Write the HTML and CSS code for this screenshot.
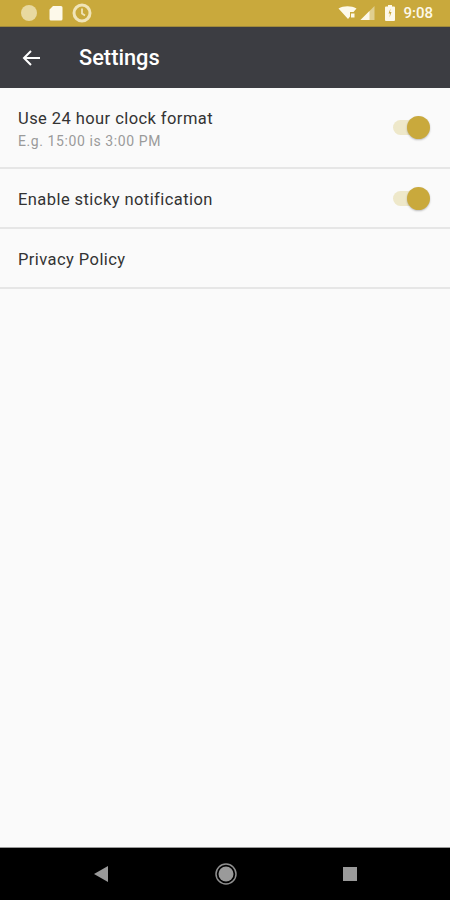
FILE: index.html
```html
<!DOCTYPE html>
<html lang="en">
<head>
  <meta charset="UTF-8">
  <meta name="viewport" content="width=device-width, initial-scale=1.0">
  <title>Settings</title>
  <link rel="stylesheet" href="styles.css">
</head>
<body>
  <div class="phone">
    <div class="status-bar">
      <div class="status-left">
        <span class="dot"></span>
        <svg class="sd-icon" width="15" height="16" viewBox="0 0 15 16"><path d="M5 1h8a1.5 1.5 0 0 1 1.500 1.500v11.500a1.500 1.500 0 0 1-1.500 1.500h-10a1.500 1.500 0 0 1-1.500-1.500v-9.500z" fill="#fdf9ea"/></svg>
        <svg class="clock-icon" width="20" height="20" viewBox="0 0 20 20"><circle cx="10" cy="10" r="8" fill="none" stroke="#f0e4b8" stroke-width="3"/><path d="M10 5.500v5l3 2" fill="none" stroke="#f0e4b8" stroke-width="1.800"/></svg>
      </div>
      <div class="status-right">
        <svg class="wifi-icon" width="19" height="14" viewBox="0 0 19 14"><path d="M0.500 2.500c5-3 13-3 18 0l-3 3.500h-3.500v4.500l-2 2.500z" fill="#fdf9ea"/><path d="M13 7.500h3.500v4h-3.500z" fill="#fdf9ea"/></svg>
        <svg class="signal-icon" width="15" height="14" viewBox="0 0 15 14"><path d="M0.500 14l14-14v14z" fill="#e0cf8f"/><path d="M0.500 14l9-9v9z" fill="#fdf9ea"/></svg>
        <svg class="battery-icon" width="10" height="16" viewBox="0 0 10 16"><path d="M3 0h4v1.500h2a1 1 0 0 1 1 1v12.500a1 1 0 0 1-1 1h-8a1 1 0 0 1-1-1v-12.500a1 1 0 0 1 1-1h2z" fill="#fdf9ea"/><path d="M5.500 3.500l-2 5h1.500l-.5 4 2-5.500h-1.500z" fill="#c9a93c"/></svg>
        <span class="clock">9:08</span>
      </div>
    </div>

    <div class="toolbar">
      <svg class="back-icon" width="20" height="18" viewBox="0 0 20 18"><path d="M19 9H3M10 2L3 9l7 7" fill="none" stroke="#fff" stroke-width="2"/></svg>
      <h1>Settings</h1>
    </div>

    <div class="settings">
      <div class="row row-tall">
        <div class="row-text">
          <div class="title">Use 24 hour clock format</div>
          <div class="summary">E.g. 15:00 is 3:00 PM</div>
        </div>
        <div class="switch"><span class="track"></span><span class="thumb"></span></div>
      </div>
      <div class="row">
        <div class="row-text">
          <div class="title">Enable sticky notification</div>
        </div>
        <div class="switch"><span class="track"></span><span class="thumb"></span></div>
      </div>
      <div class="row">
        <div class="row-text">
          <div class="title">Privacy Policy</div>
        </div>
      </div>
    </div>

    <div class="nav-bar">
      <svg width="14" height="16" viewBox="0 0 14 16"><path d="M14 0v16L0 8z" fill="#9a9a9a"/></svg>
      <svg width="22" height="22" viewBox="0 0 22 22"><circle cx="11" cy="11" r="10" fill="none" stroke="#8f8f8f" stroke-width="1.500"/><circle cx="11" cy="11" r="7.500" fill="#9a9a9a"/></svg>
      <svg width="14" height="14" viewBox="0 0 14 14"><rect width="14" height="14" fill="#9a9a9a"/></svg>
    </div>
  </div>
</body>
</html>
```

FILE: styles.css
```css
/* Settings screen */
html, body {
  margin: 0;
  padding: 0;
}

body {
  font-family: Roboto, "Liberation Sans", sans-serif;
  background-color: #fafafa;
}

.phone {
  width: 450px;
  height: 900px;
  display: flex;
  flex-direction: column;
  overflow: hidden;
}

.status-bar {
  height: 26px;
  flex-shrink: 0;
  background-color: #c9a93c;
  display: flex;
  justify-content: space-between;
  align-items: center;
  padding: 0 17px 0 21px;
  border-bottom: 1px solid #a08a3c;
}

.status-left, .status-right {
  display: flex;
  align-items: center;
}

.status-left {
  gap: 11px;
}

.dot {
  width: 16px;
  height: 16px;
  border-radius: 50%;
  background-color: #e8d9a0;
}

.sd-icon {
  margin-right: -2px;
}

.status-right .signal-icon {
  margin-left: 3px;
}

.status-right .battery-icon {
  margin-left: 10px;
}

.clock {
  margin-left: 8px;
  color: #fdf9ea;
  font-size: 15px;
  font-weight: 500;
}

.toolbar {
  height: 61px;
  flex-shrink: 0;
  background-color: #3c3d42;
  display: flex;
  align-items: center;
  padding-left: 21px;
  box-sizing: border-box;
}

.toolbar h1 {
  margin: 0 0 0 38px;
  color: #fff;
  font-size: 21.800px;
  font-weight: 500;
}

.settings {
  flex: 1;
  background-color: #fafafa;
}

.row {
  height: 60px;
  box-sizing: border-box;
  display: flex;
  align-items: center;
  justify-content: space-between;
  padding: 0 20px 0 18px;
  border-bottom: 2px solid #e6e6e6;
}

.row-tall {
  height: 81px;
}

.row-text {
  padding-top: 2px;
}

.title {
  font-size: 16.500px;
  color: #333;
  letter-spacing: 0.430px;
}

.summary {
  margin-top: 5px;
  font-size: 14px;
  color: #9a9a9a;
  letter-spacing: 0.590px;
}

.switch {
  position: relative;
  width: 37px;
  height: 23px;
}

.track {
  position: absolute;
  left: 0;
  top: 4px;
  width: 32px;
  height: 15px;
  border-radius: 8px;
  background-color: #eee8ca;
}

.thumb {
  position: absolute;
  right: 0;
  top: 0;
  width: 23px;
  height: 23px;
  border-radius: 50%;
  background-color: #c9a93c;
  box-shadow: 0 1px 2px rgba(0, 0, 0, 0.25);
}

.nav-bar {
  height: 52px;
  flex-shrink: 0;
  background-color: #000;
  border-top: 1px solid #999;
  display: flex;
  align-items: center;
  justify-content: space-between;
  padding: 0 93px 0 94px;
}
```
